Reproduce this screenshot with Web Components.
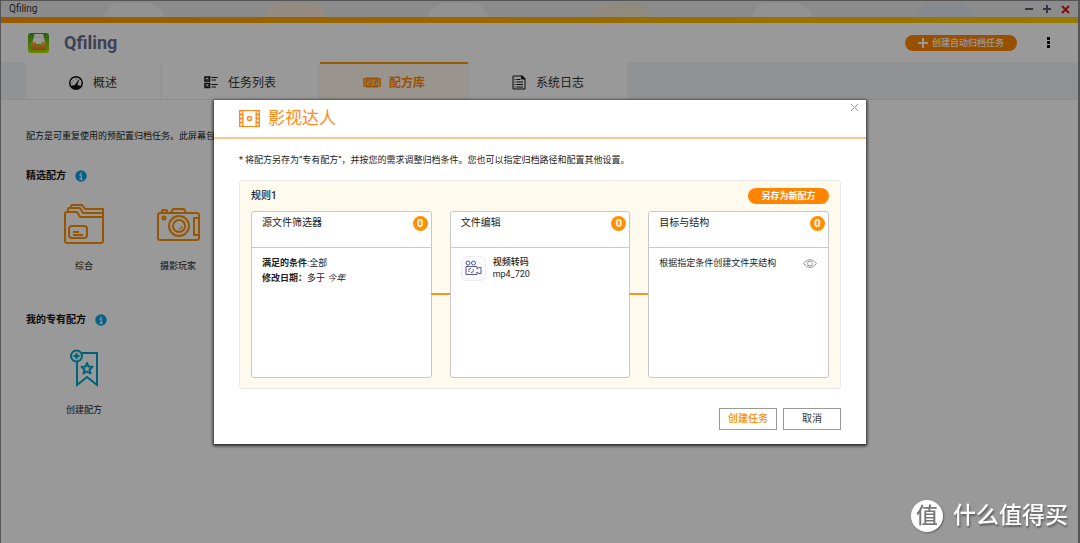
<!DOCTYPE html>
<html lang="zh-CN">
<head>
<meta charset="utf-8">
<title>Qfiling</title>
<style>
  html, body { margin: 0; height: 100%; }
  body {
    font-family: Roboto, "Noto Sans CJK SC", sans-serif;
    font-size: 9px; line-height: 14px; color: #222; background: #333; overflow: hidden;
  }
</style>
</head>
<body>
<qf-window>
  <qf-header></qf-header>
  <qf-tabs>
    <qf-tab icon="gauge">概述</qf-tab>
    <qf-tab icon="tasks">任务列表</qf-tab>
    <qf-tab icon="recipes" active>配方库</qf-tab>
    <qf-tab icon="log">系统日志</qf-tab>
  </qf-tabs>
  <qf-library>
    <span slot="intro">配方是可重复使用的预配置归档任务。此屏幕包含精选配方</span>
    <qf-section heading="精选配方">
      <qf-recipe icon="folder">综合</qf-recipe>
      <qf-recipe icon="camera">摄影玩家</qf-recipe>
    </qf-section>
    <qf-section heading="我的专有配方">
      <qf-recipe icon="bookmark" class="own">创建配方</qf-recipe>
    </qf-section>
  </qf-library>
  <qf-dialog slot="overlay" heading="影视达人">
    <span slot="note">* 将配方另存为“专有配方”，并按您的需求调整归档条件。您也可以指定归档路径和配置其他设置。</span>
    <qf-rule heading="规则1">
      <qf-card heading="源文件筛选器" count="0" linked>
        <div><b>满足的条件</b>:全部</div>
        <div><b>修改日期：</b>多于 <i>今年</i></div>
      </qf-card>
      <qf-card heading="文件编辑" count="0" linked>
        <qf-action heading="视频转码">mp4_720</qf-action>
      </qf-card>
      <qf-card heading="目标与结构" count="0">
        <qf-target>根据指定条件创建文件夹结构</qf-target>
      </qf-card>
    </qf-rule>
  </qf-dialog>
</qf-window>
<qf-watermark>什么值得买</qf-watermark>

<script>
const ICONS = {
  logo: `<svg width="21" height="20" viewBox="0 0 42 40"><defs><linearGradient id="g" x2="0" y2="1"><stop stop-color="#3da01c"/><stop offset="1" stop-color="#b4e000"/></linearGradient><linearGradient id="o" x2="0" y2="1"><stop stop-color="#ffb050"/><stop offset="1" stop-color="#e07818"/></linearGradient></defs><rect width="42" height="40" rx="6" fill="url(#g)"/><path d="M13 2h17l5 20H8z" fill="#fff"/><path d="M12 8h19" stroke="#ddd" stroke-width="2"/><path d="M6 18h9c1 0 1 1 1 2 0 3 1 4 3 4h5c2 0 3-1 3-4 0-1 0-2 1-2h8v13q0 3-3 3H9q-3 0-3-3z" fill="url(#o)"/></svg>`,
  gauge: `<svg width="14" height="14" viewBox="0 0 28 28"><circle cx="14" cy="14" r="12.500" fill="none" stroke="#111" stroke-width="3"/><path d="M3 20q11-4 22 0l-5 6H8z" fill="#111"/><path d="M12 18l8-11-4 12z" fill="#111" stroke="#111"/><path d="M5 14h2M14 5v2M8 8l1 1" stroke="#111" stroke-width="1.500"/></svg>`,
  tasks: `<svg width="14" height="13" viewBox="0 0 28 26" fill="none" stroke="#111" stroke-width="2"><path d="M2 2h9v8H2zM2 15h9v8H2z" stroke-width="3"/><path d="M4 5l3 3 6-7M4 18l3 3 6-7M15 3h12M15 8h9M15 17h12M15 22h9"/></svg>`,
  recipes: `<svg width="18" height="11" viewBox="0 0 36 22" fill="none" stroke="#ff8800" stroke-width="3"><path d="M2 2v18M34 2v18"/><path d="M5 1h12l1 1 1-1h12v20H19l-1-1-1 1H5z" fill="#ff8800" stroke="none"/><path d="M8 6h6v5H9v5h6M28 6h-7v10h7v-5h-3M18 3v16" stroke="#fff0d8" stroke-width="1.500"/></svg>`,
  log: `<svg width="14" height="15" viewBox="0 0 28 30" fill="none" stroke="#111" stroke-width="2"><path d="M2 2h19l5 5v21H2z"/><path d="M19 2v6h7z" fill="#111"/><path d="M9 9h8M9 14h13M9 19h13M9 24h13M5 9h2M5 14h2M5 19h2M5 24h2"/></svg>`,
  folder: `<svg width="44" height="40" viewBox="0 0 44 40" fill="none" stroke="#ff9000" stroke-width="2" stroke-linejoin="round"><path d="M5 8h10l3 5h23v24q0 2-2 2H5q-2 0-2-2V10q0-2 2-2z"/><path d="M6 8V5q0-1 1-1h11l3 5h20M9 4V2q0-1 1-1h10l3 4h18v8"/><rect x="7" y="22" width="18" height="12" rx="3"/><path d="M11 28h6M11 31h10"/></svg>`,
  camera: `<svg width="44" height="40" viewBox="0 0 44 40" fill="none" stroke="#ff9000" stroke-width="2" stroke-linejoin="round"><rect x="2" y="9" width="41" height="27" rx="2"/><path d="M15 9l2-4h11l2 4M6 9V7q0-1 1-1h3q1 0 1 1v2M43 14h-5v17h5"/><circle cx="23" cy="22" r="10"/><circle cx="23" cy="22" r="6"/><circle cx="8" cy="14" r="1.500"/><path d="M23 25q3 0 3-3" stroke-width="1"/></svg>`,
  bookmark: `<svg width="44" height="40" viewBox="0 0 44 40" fill="none" stroke="#00a5cf" stroke-width="2"><path d="M20 5h15v32l-10-8-10 8V14"/><circle cx="14.500" cy="8" r="5.500"/><path d="M14.500 5v6M11.500 8h6"/><path d="M25 15l1.500 3.500 4 .3-3 2.700 1 4-3.500-2-3.500 2 1-4-3-2.700 4-.3z" stroke-linejoin="round"/></svg>`,
  film: `<svg width="21" height="17" viewBox="0 0 42 34" fill="none" stroke="#ff8a1c"><path d="M1 1h40v32H1z" stroke-width="2"/><path d="M0 0h9v34H0zM33 0h9v34h-9z" fill="#ff8a1c" stroke="none"/><path d="M4.500 3v29M37.500 3v29" stroke="#fff" stroke-width="4" stroke-dasharray="4 4"/><circle cx="21" cy="17" r="4" stroke-width="3"/></svg>`,
  info: `<svg width="12" height="12" viewBox="0 0 24 24"><circle cx="12" cy="12" r="11.500" fill="#0aa0e6"/><path d="M12 5v3M9 10h3.500v8M9 18h6.500" stroke="#fff" stroke-width="2.500" fill="none"/></svg>`,
  video: `<svg width="17" height="16" viewBox="0 0 34 32" fill="none" stroke="#55578c" stroke-width="2"><circle cx="6" cy="6" r="4"/><circle cx="17" cy="6" r="4"/><path d="M2 13h22v5l4-3h4v12h-4l-4-3v5H2z"/><path d="M7 21q0-4 5-4M17 21q0 4-5 4M9 24l-2-2M15 18l2 2"/></svg>`,
  eye: `<svg width="14" height="9" viewBox="0 0 28 18" fill="none" stroke="#999" stroke-width="2"><path d="M1 9q13-16 26 0q-13 16-26 0z"/><circle cx="14" cy="9" r="5"/></svg>`
};

const RESET = `
  *, :host { box-sizing: border-box; }
  button, h1, h2, h3, p { margin: 0; padding: 0; font: inherit; color: inherit; }
  button { background: none; border: 0; cursor: pointer; white-space: nowrap; }
  svg { display: block; flex: none; }`;

/* Registers an element whose shadow root is rendered once from its attributes. */
function define(name, render) {
  customElements.define(name, class extends HTMLElement {
    constructor() { super(); this.attachShadow({ mode: "open" }); }
    connectedCallback() {
      const t = document.createElement("template");
      t.innerHTML = render(this);
      this.shadowRoot.replaceChildren(t.content.cloneNode(true));
    }
  });
}

define("qf-window", () => `<style>${RESET}
  :host { display: flex; flex-direction: column; position: relative; min-height: 100vh; background: #fff; border: 1px solid #555; border-bottom: 0; border-right-width: 2px; overflow: hidden; }
  .bar { position: relative; display: flex; align-items: center; height: 16px; padding: 0 8px; background: #e8e8e8; color: #333; font-size: 10px; }
  .bar span { flex: 1; position: relative; }
  .desk { position: absolute; inset: 2px 0 0 103px; display: flex; gap: 102px; overflow: hidden; }
  .desk i { flex: none; width: 60px; height: 40px; border-radius: 16px; background: #f4f4f4; }
  .desk i:nth-child(2) { background: #f8e8d2; }
  .desk i:nth-child(4) { background: linear-gradient(90deg, #f6e4dc, #ece8cc); }
  .desk i:nth-child(6) { background: #dfe5ee; }
  .controls { position: relative; display: flex; gap: 8px; }
  .accent { height: 6px; background: linear-gradient(90deg, #ff9800, #ffcc00); }
  ::slotted([slot=overlay]) { position: absolute; inset: 0; margin: -1px -2px 0 -1px; }
  </style>
  <div class="bar"><div class="desk"><i></i><i></i><i></i><i></i><i></i><i></i></div><span>Qfiling</span>
    <div class="controls">
      <button aria-label="最小化"><svg width="10" height="10"><path d="M1 5h8" stroke="#555b68" stroke-width="2"/></svg></button>
      <button aria-label="最大化"><svg width="10" height="10"><path d="M1 5h8M5 1v8" stroke="#555b68" stroke-width="2"/></svg></button>
      <button aria-label="关闭"><svg width="10" height="10"><path d="M2 2l7 7M9 2l-7 7" stroke="#e01020" stroke-width="2"/></svg></button>
    </div>
  </div>
  <div class="accent"></div>
  <slot></slot>
  <slot name="overlay"></slot>`);

define("qf-header", () => `<style>${RESET}
  :host { display: flex; align-items: center; height: 39px; padding: 0 23px 0 27px; }
  h1 { flex: 1; margin-left: 15px; font-size: 18px; line-height: 22px; font-weight: 700; color: #6a6d8c; }
  .create { display: flex; align-items: center; justify-content: center; gap: 4px; width: 112px; height: 16px; border-radius: 8px; background: #ff8500; color: #fff; font-weight: 500; }
  .more { margin-left: 26px; }
  </style>${ICONS.logo}<h1>Qfiling</h1>
  <button class="create"><svg width="10" height="10"><path d="M0 5h10M5 0v10" stroke="#fff" stroke-width="2"/></svg>创建自动归档任务</button>
  <button class="more" aria-label="更多"><svg width="12" height="12"><path d="M4 0h3v3h-3zM4 4h3v3h-3zM4 8h3v3h-3z" fill="#111"/></svg></button>`);

define("qf-tabs", () => `<style>${RESET}
  :host { display: flex; height: 38px; padding-left: 25px; background: #f1f4f7; border-bottom: 1px solid #e8ecf0; }
  </style><slot></slot>`);

define("qf-tab", el => `<style>${RESET}
  :host { display: flex; background: #fff; border-right: 1px solid #eceff2; }
  button { display: flex; align-items: center; gap: 10px; padding: 2px 43px 0; font-size: 12px; line-height: 18px; border-top: 2px solid transparent; color: #333; }
  :host([active]) button { background: #fff7eb; border-color: #ff9800; color: #ff8800; font-weight: 700; gap: 8px; }
  </style><button role="tab" aria-selected="${el.hasAttribute("active")}">${ICONS[el.getAttribute("icon")]}<slot></slot></button>`);

define("qf-library", () => `<style>${RESET}
  :host { display: block; padding: 29px 25px 0; }
  p { white-space: nowrap; margin-bottom: 26px; }
  </style><p><slot name="intro"></slot></p><slot></slot>`);

define("qf-section", el => `<style>${RESET}
  :host { display: block; margin-bottom: 40px; }
  header { display: flex; align-items: center; gap: 9px; margin-bottom: 21px; }
  h2 { font-size: 10px; font-weight: 700; color: #111; }
  .items { display: flex; margin-left: 11px; }
  </style><header><h2>${el.getAttribute("heading")}</h2><button aria-label="说明">${ICONS.info}</button></header>
  <div class="items"><slot></slot></div>`);

define("qf-recipe", el => `<style>${RESET}
  :host { display: block; width: 94px; }
  button { display: flex; flex-direction: column; align-items: center; gap: 15px; width: 100%; }
  </style><button>${ICONS[el.getAttribute("icon")]}<span><slot></slot></span></button>`);

define("qf-dialog", el => `<style>${RESET}
  :host { display: flex; align-items: center; justify-content: center; background: rgba(0,0,0,.4); }
  .box { position: relative; width: 652px; max-width: 96%; background: #fff; box-shadow: 0 1px 3px 1px rgba(0,0,0,.75); }
  header { display: flex; align-items: center; gap: 8px; height: 39px; padding: 0 25px; border-bottom: 2px solid #ffc48a; }
  h2 { font-size: 17px; line-height: 24px; color: #ff8a1c; }
  .close { position: absolute; top: 3px; right: 7px; }
  .body { padding: 14px 25px 14px; }
  p { margin-bottom: 13px; }
  footer { display: flex; justify-content: flex-end; gap: 6px; margin-top: 19px; }
  footer button { width: 58px; height: 22px; font-size: 10px; border: 1px solid #999; color: #333; }
  footer .primary { color: #ff8a00; font-weight: 500; }
  </style>
  <section class="box" role="dialog" aria-modal="true" aria-labelledby="t">
    <header>${ICONS.film}<h2 id="t">${el.getAttribute("heading")}</h2></header>
    <button class="close" aria-label="关闭"><svg width="9" height="9"><path d="M1 1l7 7M8 1l-7 7" stroke="#999"/></svg></button>
    <div class="body"><p><slot name="note"></slot></p><slot></slot>
    <footer><button class="primary">创建任务</button><button>取消</button></footer></div>
  </section>`);

define("qf-rule", el => `<style>${RESET}
  :host { display: block; padding: 7px 11px 10px; background: #fffaee; border: 1px solid #e8e8e8; border-radius: 3px; }
  header { display: flex; align-items: center; justify-content: space-between; margin-bottom: 7px; }
  h3 { font-size: 10px; line-height: 16px; font-weight: 500; color: #222; }
  button { width: 81px; height: 16px; border-radius: 8px; background: #ff8500; color: #fff; font-weight: 700; }
  .cards { display: grid; grid-template-columns: repeat(3, 1fr); gap: 18px; }
  </style><header><h3>${el.getAttribute("heading")}</h3><button>另存为新配方</button></header><div class="cards"><slot></slot></div>`);

define("qf-card", el => `<style>${RESET}
  :host { display: block; position: relative; min-height: 167px; background: #fff; border: 1px solid #c8c8c8; border-radius: 3px; }
  :host([linked])::after { content: ""; position: absolute; top: 50%; left: 100%; width: 20px; height: 2px; margin-top: -1px; background: #f7941d; }
  header { display: flex; justify-content: space-between; height: 36px; padding: 4px 3px 0 10px; border-bottom: 1px solid #ccc; }
  h3 { font-size: 10px; }
  .n { width: 15px; height: 15px; line-height: 16px; border-radius: 50%; background: #ff9000; color: #fff; font-size: 11px; font-weight: 700; text-align: center; }
  .body { padding: 8px 11px 8px 10px; line-height: 15px; }
  </style><header><h3>${el.getAttribute("heading")}</h3><span class="n">${el.getAttribute("count")}</span></header><div class="body"><slot></slot></div>`);

define("qf-action", el => `<style>${RESET}
  :host { display: flex; align-items: center; gap: 7px; line-height: 12px; }
  .icon { display: flex; align-items: center; justify-content: center; width: 25px; height: 25px; border: 1px solid #ececf4; border-radius: 6px; background: #fafaff; }
  b { display: block; font-weight: 500; }
  </style><span class="icon">${ICONS.video}</span><div><b>${el.getAttribute("heading")}</b><slot></slot></div>`);

define("qf-target", () => `<style>${RESET}
  :host { display: flex; align-items: center; justify-content: space-between; white-space: nowrap; }
  </style><span><slot></slot></span><button aria-label="预览">${ICONS.eye}</button>`);

define("qf-watermark", () => `<style>${RESET}
  :host { position: fixed; right: 12px; bottom: 11px; display: flex; align-items: center; gap: 10px; color: #fff; font-size: 23px; line-height: 32px; font-weight: 500; text-shadow: 1px 2px 2px rgba(0,0,0,.4); }
  .seal { width: 32px; height: 32px; border-radius: 50%; background: #fff; color: #777; font-size: 22px; text-align: center; text-shadow: none; box-shadow: 1px 1px 2px rgba(0,0,0,.35); }
  </style><span class="seal">值</span><span><slot></slot></span>`);
</script>
</body>
</html>
